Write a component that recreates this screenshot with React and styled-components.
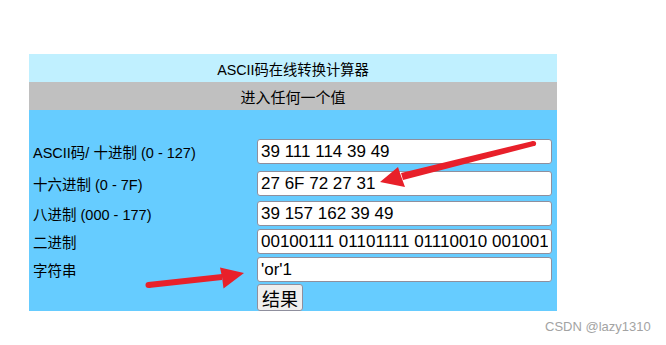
import React from 'react';
import styled, {createGlobalStyle} from 'styled-components';

const rows = [
    {label: 'ASCII码/ 十进制 (0 - 127)', value: '39 111 114 39 49', top: 29},
    {label: '十六进制 (0 - 7F)', value: '27 6F 72 27 31', top: 7},
    {label: '八进制 (000 - 177)', value: '39 157 162 39 49', top: 5},
    {label: '二进制', value: '00100111 01101111 01110010 00100111 00110001', top: 3},
    {label: '字符串', value: "'or'1", top: 3},
];

export default function App() {
    return (
        <Page>
            <GlobalStyle />
            <Panel>
                <TitleBar>ASCII码在线转换计算器</TitleBar>
                <SubBar>进入任何一个值</SubBar>
                <Form>
                    {rows.map((r) => (
                        <Row key={r.label} $top={r.top}>
                            <Label>{r.label}</Label>
                            <Field defaultValue={r.value} />
                        </Row>
                    ))}
                    <Row $top={2}>
                        <Label />
                        <Button>结果</Button>
                    </Row>
                </Form>
            </Panel>
            <Watermark>CSDN @lazy1310</Watermark>
            <Arrows width="666" height="345" viewBox="0 0 666 345">
                <path d="M533 141 L401 173 L403 180 L534 146 Z" fill="#e8202a" />
                <circle cx="533.5" cy="143.5" r="2.6" fill="#e8202a" />
                <path d="M380 182 L398 167 L401 176 L405 187 Z" fill="#e8202a" />
                <path d="M148 282 L222 274 L222 280 L149 288 Z" fill="#e8202a" />
                <circle cx="148.5" cy="285" r="3" fill="#e8202a" />
                <path d="M244 273 L220 267.5 L222 277 L223.5 288.5 Z" fill="#e8202a" />
            </Arrows>
        </Page>
    );
}

const GlobalStyle = createGlobalStyle`
body {
    margin: 0;
    background: #ffffff;
    font-family: "Liberation Sans", "Noto Sans CJK SC", sans-serif;
}
`;

const Page = styled.div`
position: relative;
width: 666px;
height: 345px;
padding: 54px 0 0 29px;
box-sizing: border-box;
`;

const Panel = styled.div`
width: 528px;
display: flex;
flex-direction: column;
`;

const TitleBar = styled.div`
height: 28px;
background-color: #c0f0ff;
display: flex;
align-items: center;
justify-content: center;
font-size: 14.3px;
color: #000;
`;

const SubBar = styled.div`
height: 28px;
background-color: #c0c0c0;
display: flex;
align-items: center;
justify-content: center;
font-size: 15px;
color: #000;
`;

const Form = styled.div`
background-color: #66ccff;
display: flex;
flex-direction: column;
padding: 0 0 1px 4px;
height: 201px;
box-sizing: border-box;
`;

const Row = styled.div`
display: flex;
align-items: center;
margin-top: ${(p) => p.$top}px;
`;

const Label = styled.div`
width: 224px;
font-size: 14.5px;
color: #000;
`;

const Field = styled.input`
width: 295px;
height: 25px;
box-sizing: border-box;
border: 1px solid #8f8f9d;
border-radius: 3px;
padding: 0 3px;
font-family: "Liberation Sans", "Noto Sans CJK SC", sans-serif;
font-size: 17px;
color: #000;
background: #fff;
outline: none;
`;

const Button = styled.button`
height: 27px;
padding: 0 4px;
box-sizing: border-box;
border: 1px solid #8f8f9d;
border-radius: 3px;
background-color: #efefef;
font-family: "Liberation Sans", "Noto Sans CJK SC", sans-serif;
font-size: 18px;
color: #000;
`;

const Watermark = styled.div`
position: absolute;
left: 545px;
top: 319px;
font-size: 13px;
color: #a3a3a3;
`;

const Arrows = styled.svg`
position: absolute;
left: 0;
top: 0;
pointer-events: none;
`;
